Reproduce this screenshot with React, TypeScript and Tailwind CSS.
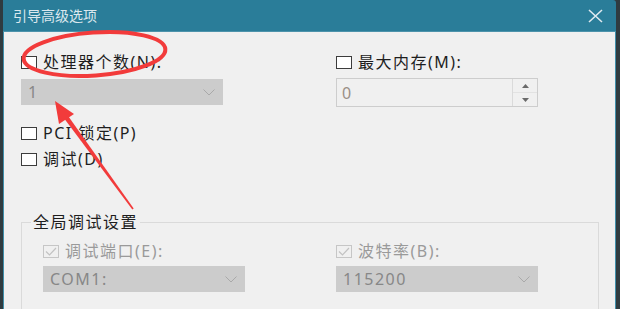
import React from "react";

function Box({ disabled, checked }: { disabled?: boolean; checked?: boolean }) {
  return (
    <span
      className={
        disabled
          ? "w-[16px] h-[13px] border border-[#c6c6c6] bg-[#f0f0f0] flex items-center justify-center shrink-0"
          : "w-[16px] h-[13px] border border-[#3c3c3c] bg-white flex items-center justify-center shrink-0"
      }
    >
      {checked && (
        <svg width="12" height="9" viewBox="0 0 12 9">
          <path d="M1 4.5 L4.5 8 L11 1" stroke="#c2c2c2" strokeWidth="1.2" fill="none" />
        </svg>
      )}
    </span>
  );
}

function Chevron() {
  return (
    <svg width="12" height="7" viewBox="0 0 12 7">
      <path d="M0.5 0.5 L6 6 L11.5 0.5" stroke="#a9a9a9" strokeWidth="1" fill="none" />
    </svg>
  );
}

function Dropdown({ value }: { value: string }) {
  return (
    <div className="w-[202px] h-[26px] bg-[#cccccc] flex items-center justify-between pl-[7px] pr-[8px] text-[#878787]">
      <span>{value}</span>
      <Chevron />
    </div>
  );
}

function Row({ label, disabled, checked }: { label: string; disabled?: boolean; checked?: boolean }) {
  return (
    <div className={"h-[22px] flex items-center gap-[6px] " + (disabled ? "text-[#9a9a9a]" : "text-[#1e1e1e]")}>
      <Box disabled={disabled} checked={checked} />
      <span className="whitespace-nowrap">{label}</span>
    </div>
  );
}

export default function App() {
  return (
    <div className="w-[620px] h-[309px] overflow-hidden relative flex bg-[#2f3b40] font-['Noto_Sans','Noto_Sans_CJK_SC',sans-serif] text-[16px] tracking-[1.5px] leading-[22px]">
      <div className="w-[3px] shrink-0" />
      <div className="w-[613px] h-[309px] flex flex-col">
        <div className="h-[32px] shrink-0 bg-[#2a7d99] flex items-center justify-between pl-[10px] pr-[13px] rounded-tr-[3px] border-b border-[#4d93ab]">
          <span className="text-[14px] tracking-[0px] text-[#dce8ee]">引导高级选项</span>
          <svg width="15" height="14" viewBox="0 0 15 14">
            <path d="M1 1 L14 13 M14 1 L1 13" stroke="#dfeaf0" strokeWidth="1.6" />
          </svg>
        </div>
        <div className="flex-1 min-h-0 overflow-hidden bg-[#f0f0f0] border-x border-[#3f8fab] pl-[17px] pt-[19px] flex flex-col">
          <div className="flex shrink-0">
            <div className="w-[315px] flex flex-col">
              <Row label="处理器个数(N):" />
              <div className="mt-[6px]">
                <Dropdown value="1" />
              </div>
              <div className="mt-[17px]">
                <Row label="PCI 锁定(P)" />
              </div>
              <div className="mt-[4px]">
                <Row label="调试(D)" />
              </div>
            </div>
            <div className="flex flex-col">
              <Row label="最大内存(M):" />
              <div className="mt-[5px] w-[202px] h-[29px] border border-[#cdcdcd] bg-[#f0f0f0] flex">
                <div className="flex-1 flex items-center pl-[5px] text-[#9a8f86]">0</div>
                <div className="w-[25px] border-l border-[#dadada] flex flex-col">
                  <div className="flex-1 flex items-center justify-center border-b border-[#e2e2e2]">
                    <svg width="7" height="4" viewBox="0 0 7 4">
                      <path d="M0 4 L3.5 0 L7 4 Z" fill="#6a6a6a" />
                    </svg>
                  </div>
                  <div className="flex-1 flex items-center justify-center">
                    <svg width="7" height="4" viewBox="0 0 7 4">
                      <path d="M0 0 L3.5 4 L7 0 Z" fill="#6a6a6a" />
                    </svg>
                  </div>
                </div>
              </div>
            </div>
          </div>
          <fieldset className="mt-[41px] w-[578px] h-[200px] border border-[#dadada] pl-[9px] shrink-0">
            <legend className="px-[2px] text-[#1e1e1e] h-[22px]">全局调试设置</legend>
            <div className="flex ml-[12px]">
              <div className="w-[293px] flex flex-col">
                <div className="mt-[7px]">
                  <Row label="调试端口(E):" disabled checked />
                </div>
                <div className="mt-[4px]">
                  <Dropdown value="COM1:" />
                </div>
              </div>
              <div className="flex flex-col">
                <div className="mt-[7px]">
                  <Row label="波特率(B):" disabled checked />
                </div>
                <div className="mt-[4px]">
                  <Dropdown value="115200" />
                </div>
              </div>
            </div>
          </fieldset>
        </div>
      </div>
      <div className="w-[4px] shrink-0" />
      <svg className="absolute inset-0 pointer-events-none" width="620" height="309" viewBox="0 0 620 309">
        <ellipse cx="94.5" cy="54" rx="71" ry="21.5" transform="rotate(-4 94.5 54)" stroke="#f23b3b" strokeWidth="4" fill="none" />
        <polygon points="67.8,115.6 64.2,118.4 132.3,209.5 133.7,208.5" fill="#f23b3b" />
        <polygon points="55,101 74,114 59,124" fill="#f23b3b" />
      </svg>
    </div>
  );
}
